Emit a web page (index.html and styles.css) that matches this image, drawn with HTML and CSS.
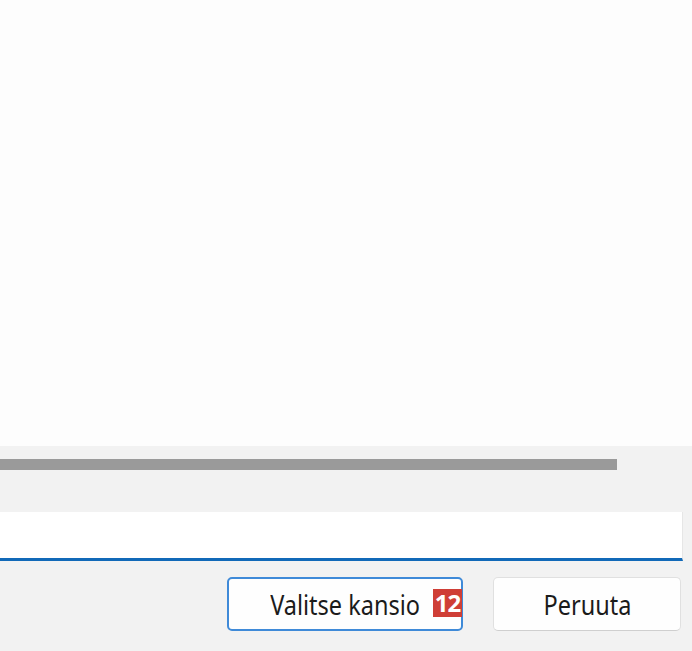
FILE: index.html
```html
<!DOCTYPE html>
<html lang="fi">
<head>
<meta charset="utf-8">
<link rel="stylesheet" href="styles.css">
</head>
<body>
<div class="content"></div>
<div class="footer">
  <div class="scroll-track"><div class="scroll-thumb"></div></div>
  <div class="field"></div>
  <div class="actions">
    <button class="btn primary"><span class="label">Valitse kansio</span><span class="badge">12</span></button>
    <button class="btn"><span class="label">Peruuta</span></button>
  </div>
</div>
</body>
</html>
```
FILE: styles.css
```css
* { box-sizing: border-box; }
html, body { margin: 0; padding: 0; }
body {
  width: 692px;
  height: 651px;
  overflow: hidden;
  font-family: "Noto Sans", "Open Sans", sans-serif;
  background: #f3f3f3;
  display: flex;
  flex-direction: column;
}
.content {
  height: 446px;
  background: #fdfdfd;
}
.footer {
  flex: 1;
  background: #f2f2f2;
  display: flex;
  flex-direction: column;
}
.scroll-track {
  padding-top: 13px;
  height: 66px;
}
.scroll-thumb {
  width: 617px;
  height: 11px;
  background: #9a9a9a;
}
.field {
  width: 683px;
  height: 49px;
  background: #ffffff;
  border-right: 1px solid #e6e6e6;
  border-bottom: 3px solid #1169b8;
}
.actions {
  display: flex;
  justify-content: flex-end;
  gap: 30px;
  padding: 16px 11px 0 0;
}
.btn {
  position: relative;
  height: 54px;
  background: #fefefe;
  border: 1px solid #e0e0e0;
  border-bottom-color: #cfcfcf;
  border-radius: 5px;
  font-family: inherit;
  font-size: 27px;
  color: #1b1b1b;
  display: flex;
  align-items: center;
  justify-content: center;
  padding: 0;
}
.btn .label {
  display: inline-block;
  transform: scaleX(0.87);
  white-space: nowrap;
}
.btn.primary {
  width: 236px;
  border: 2px solid #3f8ad8;
}
.btn:not(.primary) { width: 188px; }
.badge {
  position: absolute;
  right: -1px;
  top: 10px;
  width: 29px;
  height: 28px;
  background: #cf3e36;
  color: #fff;
  font-size: 24px;
  font-weight: 700;
  line-height: 28px;
  text-align: center;
  letter-spacing: -1px;
}
```
